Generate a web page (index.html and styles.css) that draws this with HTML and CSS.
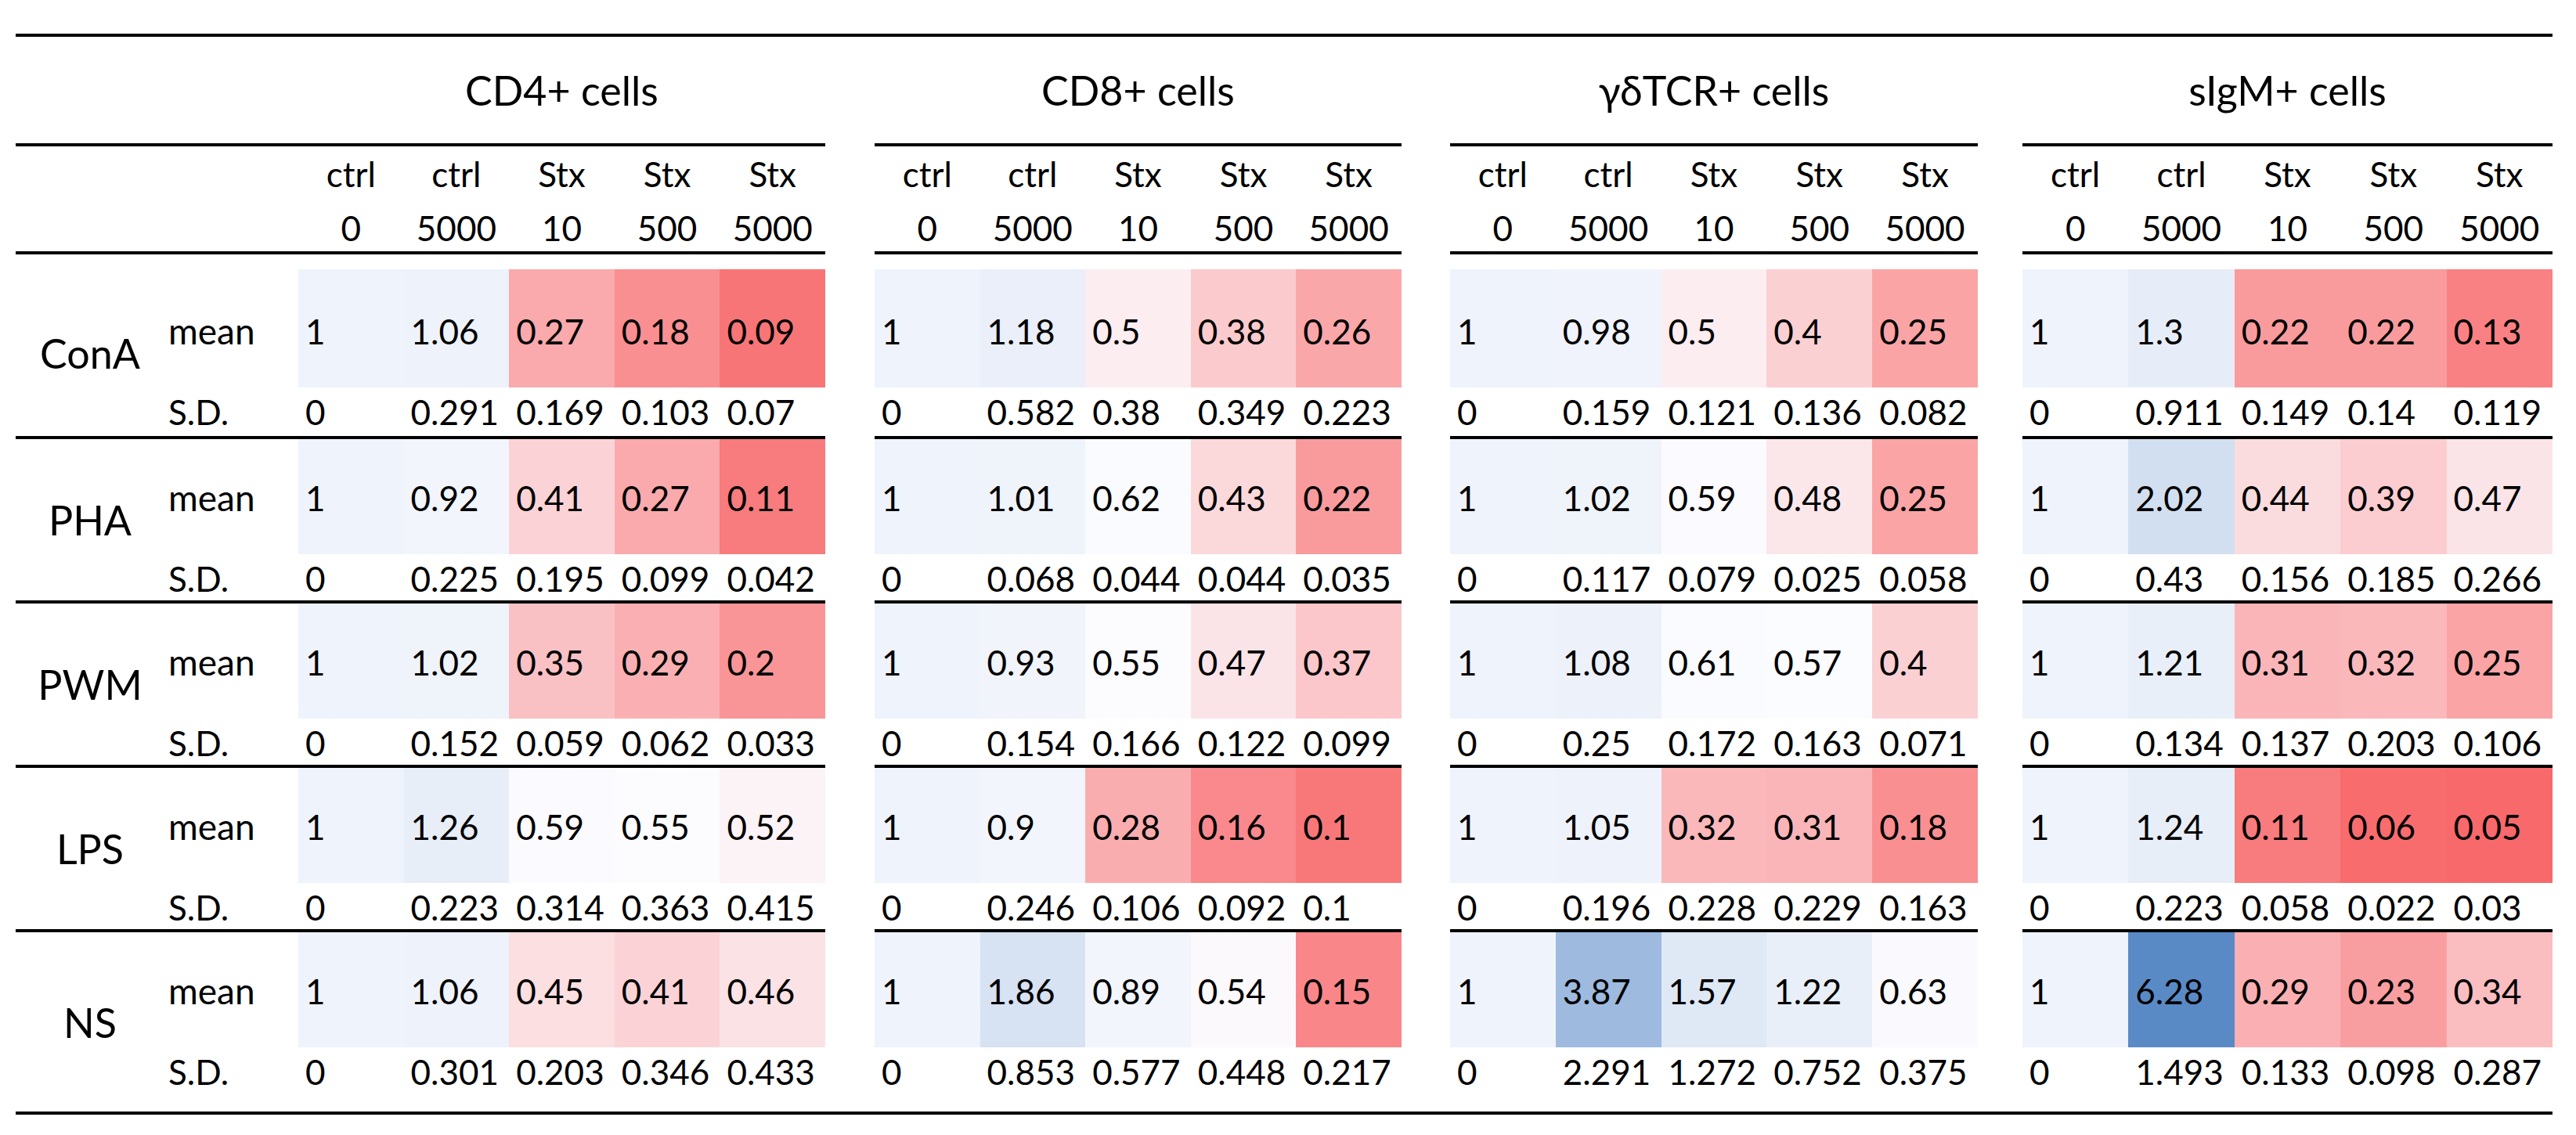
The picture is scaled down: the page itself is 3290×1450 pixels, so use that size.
FILE: index.html
```html
<!DOCTYPE html>
<html lang="en">
<head>
<meta charset="utf-8">
<title>Stx table</title>
<link rel="stylesheet" href="styles.css">
</head>
<body>
<table class="tbl">
<colgroup>
<col class="c-grp"><col class="c-stat">
<col class="c-a"><col class="c-a"><col class="c-a"><col class="c-a"><col class="c-a">
<col class="c-gap1">
<col class="c-a"><col class="c-a"><col class="c-a"><col class="c-a"><col class="c-a">
<col class="c-gap2">
<col class="c-b"><col class="c-b"><col class="c-b"><col class="c-b"><col class="c-b">
<col class="c-gap3">
<col class="c-c"><col class="c-c"><col class="c-c"><col class="c-c"><col class="c-c">
</colgroup>
<tr class="r-group">
<td class="rule" colspan="2"></td>
<td class="rule grp" colspan="5">CD4+ cells</td>
<td class="gap"></td>
<td class="rule grp" colspan="5">CD8+ cells</td>
<td class="gap"></td>
<td class="rule grp" colspan="5">γδTCR+ cells</td>
<td class="gap"></td>
<td class="rule grp" colspan="5">sIgM+ cells</td>
</tr>
<tr class="r-sub">
<td class="rule" colspan="2"></td>
<td class="rule sub"><div class="l1">ctrl</div><div class="l2">0</div></td>
<td class="rule sub"><div class="l1">ctrl</div><div class="l2">5000</div></td>
<td class="rule sub"><div class="l1">Stx</div><div class="l2">10</div></td>
<td class="rule sub"><div class="l1">Stx</div><div class="l2">500</div></td>
<td class="rule sub"><div class="l1">Stx</div><div class="l2">5000</div></td>
<td class="gap"></td>
<td class="rule sub"><div class="l1">ctrl</div><div class="l2">0</div></td>
<td class="rule sub"><div class="l1">ctrl</div><div class="l2">5000</div></td>
<td class="rule sub"><div class="l1">Stx</div><div class="l2">10</div></td>
<td class="rule sub"><div class="l1">Stx</div><div class="l2">500</div></td>
<td class="rule sub"><div class="l1">Stx</div><div class="l2">5000</div></td>
<td class="gap"></td>
<td class="rule sub"><div class="l1">ctrl</div><div class="l2">0</div></td>
<td class="rule sub"><div class="l1">ctrl</div><div class="l2">5000</div></td>
<td class="rule sub"><div class="l1">Stx</div><div class="l2">10</div></td>
<td class="rule sub"><div class="l1">Stx</div><div class="l2">500</div></td>
<td class="rule sub"><div class="l1">Stx</div><div class="l2">5000</div></td>
<td class="gap"></td>
<td class="rule sub"><div class="l1">ctrl</div><div class="l2">0</div></td>
<td class="rule sub"><div class="l1">ctrl</div><div class="l2">5000</div></td>
<td class="rule sub"><div class="l1">Stx</div><div class="l2">10</div></td>
<td class="rule sub"><div class="l1">Stx</div><div class="l2">500</div></td>
<td class="rule sub"><div class="l1">Stx</div><div class="l2">5000</div></td>
</tr>
<tr class="r-sp"><td colspan="23"></td></tr>

<tr class="r-mean first">
<td class="lbl" rowspan="2">ConA</td><td class="stat mn">mean</td>
<td class="m">1</td><td class="m">1.06</td><td class="m">0.27</td><td class="m">0.18</td><td class="m">0.09</td><td class="gap"></td>
<td class="m">1</td><td class="m">1.18</td><td class="m">0.5</td><td class="m">0.38</td><td class="m">0.26</td><td class="gap"></td>
<td class="m">1</td><td class="m">0.98</td><td class="m">0.5</td><td class="m">0.4</td><td class="m">0.25</td><td class="gap"></td>
<td class="m">1</td><td class="m">1.3</td><td class="m">0.22</td><td class="m">0.22</td><td class="m">0.13</td>
</tr>
<tr class="r-sd first">
<td class="stat">S.D.</td>
<td class="v">0</td><td class="v">0.291</td><td class="v">0.169</td><td class="v">0.103</td><td class="v">0.07</td><td class="gap"></td>
<td class="v">0</td><td class="v">0.582</td><td class="v">0.38</td><td class="v">0.349</td><td class="v">0.223</td><td class="gap"></td>
<td class="v">0</td><td class="v">0.159</td><td class="v">0.121</td><td class="v">0.136</td><td class="v">0.082</td><td class="gap"></td>
<td class="v">0</td><td class="v">0.911</td><td class="v">0.149</td><td class="v">0.14</td><td class="v">0.119</td>
</tr>

<tr class="r-mean">
<td class="lbl" rowspan="2">PHA</td><td class="stat mn">mean</td>
<td class="m">1</td><td class="m">0.92</td><td class="m">0.41</td><td class="m">0.27</td><td class="m">0.11</td><td class="gap"></td>
<td class="m">1</td><td class="m">1.01</td><td class="m">0.62</td><td class="m">0.43</td><td class="m">0.22</td><td class="gap"></td>
<td class="m">1</td><td class="m">1.02</td><td class="m">0.59</td><td class="m">0.48</td><td class="m">0.25</td><td class="gap"></td>
<td class="m">1</td><td class="m">2.02</td><td class="m">0.44</td><td class="m">0.39</td><td class="m">0.47</td>
</tr>
<tr class="r-sd">
<td class="stat">S.D.</td>
<td class="v">0</td><td class="v">0.225</td><td class="v">0.195</td><td class="v">0.099</td><td class="v">0.042</td><td class="gap"></td>
<td class="v">0</td><td class="v">0.068</td><td class="v">0.044</td><td class="v">0.044</td><td class="v">0.035</td><td class="gap"></td>
<td class="v">0</td><td class="v">0.117</td><td class="v">0.079</td><td class="v">0.025</td><td class="v">0.058</td><td class="gap"></td>
<td class="v">0</td><td class="v">0.43</td><td class="v">0.156</td><td class="v">0.185</td><td class="v">0.266</td>
</tr>

<tr class="r-mean">
<td class="lbl" rowspan="2">PWM</td><td class="stat mn">mean</td>
<td class="m">1</td><td class="m">1.02</td><td class="m">0.35</td><td class="m">0.29</td><td class="m">0.2</td><td class="gap"></td>
<td class="m">1</td><td class="m">0.93</td><td class="m">0.55</td><td class="m">0.47</td><td class="m">0.37</td><td class="gap"></td>
<td class="m">1</td><td class="m">1.08</td><td class="m">0.61</td><td class="m">0.57</td><td class="m">0.4</td><td class="gap"></td>
<td class="m">1</td><td class="m">1.21</td><td class="m">0.31</td><td class="m">0.32</td><td class="m">0.25</td>
</tr>
<tr class="r-sd">
<td class="stat">S.D.</td>
<td class="v">0</td><td class="v">0.152</td><td class="v">0.059</td><td class="v">0.062</td><td class="v">0.033</td><td class="gap"></td>
<td class="v">0</td><td class="v">0.154</td><td class="v">0.166</td><td class="v">0.122</td><td class="v">0.099</td><td class="gap"></td>
<td class="v">0</td><td class="v">0.25</td><td class="v">0.172</td><td class="v">0.163</td><td class="v">0.071</td><td class="gap"></td>
<td class="v">0</td><td class="v">0.134</td><td class="v">0.137</td><td class="v">0.203</td><td class="v">0.106</td>
</tr>

<tr class="r-mean">
<td class="lbl" rowspan="2">LPS</td><td class="stat mn">mean</td>
<td class="m">1</td><td class="m">1.26</td><td class="m">0.59</td><td class="m">0.55</td><td class="m">0.52</td><td class="gap"></td>
<td class="m">1</td><td class="m">0.9</td><td class="m">0.28</td><td class="m">0.16</td><td class="m">0.1</td><td class="gap"></td>
<td class="m">1</td><td class="m">1.05</td><td class="m">0.32</td><td class="m">0.31</td><td class="m">0.18</td><td class="gap"></td>
<td class="m">1</td><td class="m">1.24</td><td class="m">0.11</td><td class="m">0.06</td><td class="m">0.05</td>
</tr>
<tr class="r-sd">
<td class="stat">S.D.</td>
<td class="v">0</td><td class="v">0.223</td><td class="v">0.314</td><td class="v">0.363</td><td class="v">0.415</td><td class="gap"></td>
<td class="v">0</td><td class="v">0.246</td><td class="v">0.106</td><td class="v">0.092</td><td class="v">0.1</td><td class="gap"></td>
<td class="v">0</td><td class="v">0.196</td><td class="v">0.228</td><td class="v">0.229</td><td class="v">0.163</td><td class="gap"></td>
<td class="v">0</td><td class="v">0.223</td><td class="v">0.058</td><td class="v">0.022</td><td class="v">0.03</td>
</tr>

<tr class="r-mean">
<td class="lbl" rowspan="2">NS</td><td class="stat mn">mean</td>
<td class="m">1</td><td class="m">1.06</td><td class="m">0.45</td><td class="m">0.41</td><td class="m">0.46</td><td class="gap"></td>
<td class="m">1</td><td class="m">1.86</td><td class="m">0.89</td><td class="m">0.54</td><td class="m">0.15</td><td class="gap"></td>
<td class="m">1</td><td class="m">3.87</td><td class="m">1.57</td><td class="m">1.22</td><td class="m">0.63</td><td class="gap"></td>
<td class="m">1</td><td class="m">6.28</td><td class="m">0.29</td><td class="m">0.23</td><td class="m">0.34</td>
</tr>
<tr class="r-sd last">
<td class="stat">S.D.</td>
<td class="v">0</td><td class="v">0.301</td><td class="v">0.203</td><td class="v">0.346</td><td class="v">0.433</td><td class="gap"></td>
<td class="v">0</td><td class="v">0.853</td><td class="v">0.577</td><td class="v">0.448</td><td class="v">0.217</td><td class="gap"></td>
<td class="v">0</td><td class="v">2.291</td><td class="v">1.272</td><td class="v">0.752</td><td class="v">0.375</td><td class="gap"></td>
<td class="v">0</td><td class="v">1.493</td><td class="v">0.133</td><td class="v">0.098</td><td class="v">0.287</td>
</tr>
</table>
<script src="script.js"></script>
</body>
</html>
```

FILE: styles.css
```css
html, body {
  margin: 0;
  padding: 0;
  background: #ffffff;
}
body {
  padding: 43px 0 0 20px;
  font-family: Lato, "Noto Sans", "DejaVu Sans", sans-serif;
  color: #000000;
}
.tbl {
  table-layout: fixed;
  width: 3240px;
  border-collapse: separate;
  border-spacing: 0;
  font-size: 44px;
  line-height: 52px;
}
.c-grp { width: 190px; }
.c-stat { width: 171px; }
.c-a { width: 134.6px; }
.c-b { width: 134.8px; }
.c-c { width: 135.4px; }
.c-gap1 { width: 63px; }
.c-gap2 { width: 62px; }
.c-gap3 { width: 57px; }

.tbl td {
  padding: 0;
  white-space: nowrap;
  box-sizing: border-box;
}

/* group header row */
.r-group { height: 144px; }
.r-group td {
  border-top: 4px solid #000;
  vertical-align: middle;
}
.r-group td.rule { border-bottom: 4px solid #000; }
.grp {
  text-align: center;
  font-size: 52px;
  line-height: 62px;
}

/* sub header row */
.r-sub { height: 138px; }
.r-sub td { vertical-align: top; }
.r-sub td.rule { border-bottom: 4px solid #000; }
.sub {
  text-align: center;
  padding-top: 9px !important;
}
.sub .l1 { line-height: 52px; }
.sub .l2 { line-height: 52px; margin-top: 17px; }

/* spacer */
.r-sp { height: 19px; }
.r-sp td { font-size: 0; line-height: 0; }

/* data rows */
.r-mean { height: 147px; }
.r-mean.first { height: 151px; }
.r-sd { height: 63px; }
.r-sd.first { height: 66px; }
.r-sd.last { height: 86px; }

.r-mean td.m,
.r-mean td.stat {
  vertical-align: bottom;
  padding-bottom: 46px;
}
.r-sd td {
  vertical-align: top;
  padding-top: 5px;
}
.r-sd td:not(.gap) { border-bottom: 4px solid #000; }
.r-sd.last td.gap { border-bottom: 4px solid #000; }

.m, .v {
  text-align: left;
  padding-left: 9px !important;
}
.stat {
  text-align: left;
  padding-left: 5px !important;
}
.stat.mn { font-size: 46px; }
.lbl {
  text-align: center;
  vertical-align: middle;
  font-size: 52px;
  line-height: 62px;
  border-bottom: 4px solid #000;
}
```

FILE: script.js
```js
(function () {
  var cells = Array.prototype.slice.call(document.querySelectorAll('td.m'));
  var vals = cells.map(function (c) { return parseFloat(c.textContent); });
  var s = vals.slice().sort(function (a, b) { return a - b; });
  var n = s.length;
  var r = (n - 1) * 0.5;
  var lo = Math.floor(r), hi = Math.ceil(r);
  var mid = s[lo] + (s[hi] - s[lo]) * (r - lo);
  var min = s[0], max = s[n - 1];
  var cMin = [248, 105, 107], cMid = [252, 252, 255], cMax = [90, 138, 198];
  cells.forEach(function (c, i) {
    var x = vals[i], t, a, b;
    if (x <= mid) { t = (x - min) / (mid - min); a = cMin; b = cMid; }
    else { t = (x - mid) / (max - mid); a = cMid; b = cMax; }
    var col = a.map(function (k, j) { return Math.round(k + (b[j] - k) * t); });
    c.style.backgroundColor = 'rgb(' + col.join(',') + ')';
  });
})();
```
